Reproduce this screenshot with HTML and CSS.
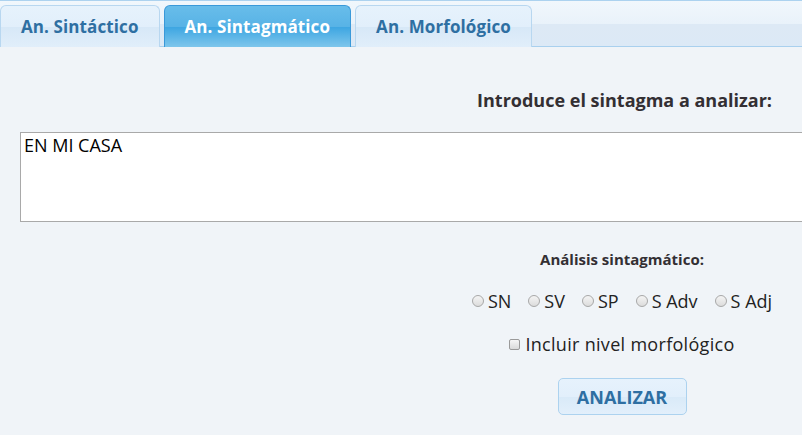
FILE: index.html
```html
<!DOCTYPE html>
<html lang="es">
<head>
<meta charset="utf-8">
<title>Análisis sintagmático</title>
<link rel="stylesheet" href="styles.css">
</head>
<body>
<div class="page">
  <nav class="tabbar">
    <a class="tab">An. Sintáctico</a>
    <a class="tab active">An. Sintagmático</a>
    <a class="tab">An. Morfológico</a>
  </nav>
  <main class="content">
    <div class="prompt">Introduce el sintagma a analizar:</div>
    <textarea class="input">EN MI CASA</textarea>
    <div class="controls">
      <div class="sub">Análisis sintagmático:</div>
      <div class="radios">
        <label class="opt"><span class="radio"></span>SN</label>
        <label class="opt"><span class="radio"></span>SV</label>
        <label class="opt"><span class="radio"></span>SP</label>
        <label class="opt"><span class="radio"></span>S Adv</label>
        <label class="opt"><span class="radio"></span>S Adj</label>
      </div>
      <div class="check"><span class="box"></span>Incluir nivel morfológico</div>
      <button class="btn">ANALIZAR</button>
    </div>
  </main>
</div>
</body>
</html>
```
FILE: styles.css
```css
html, body {
  margin: 0;
  padding: 0;
  background: #f0f4f8;
  overflow: hidden;
}
.page {
  font-family: "Open Sans", "Noto Sans", sans-serif;
  width: 802px;
  height: 435px;
  overflow: hidden;
}
.tabbar {
  display: flex;
  align-items: flex-end;
  gap: 4px;
  box-sizing: border-box;
  height: 47px;
  border-top: 1px solid #acd2ef;
  border-bottom: 1px solid #a9d0ee;
  background: linear-gradient(#f1f7fc 0%, #e9f2fa 50%, #dde9f5 51%, #dce9f6 100%);
}
.tab {
  box-sizing: border-box;
  height: 42px;
  margin-bottom: -1px;
  padding: 0 20px;
  display: flex;
  align-items: center;
  font-weight: bold;
  font-size: 17px;
  letter-spacing: 0.1px;
  color: #2e6fa2;
  border: 1px solid #b8d7f0;
  border-bottom: none;
  border-radius: 6px 6px 0 0;
  background: linear-gradient(#e6f2fc 0%, #e2effb 50%, #d7e8f7 51%, #e1eefa 100%);
}
.tab.active {
  color: #fff;
  border-color: #3a99d9;
  background: linear-gradient(#68bdea 0%, #58b3e6 50%, #3ea6e2 52%, #7ec6ec 100%);
}
.content {
  padding-top: 41px;
}
.prompt {
  width: 772px;
  text-align: right;
  font-weight: bold;
  font-size: 18px;
  color: #332f33;
  line-height: 24px;
}
.input {
  display: block;
  box-sizing: border-box;
  margin: 20px 0 0 20px;
  width: 900px;
  height: 90px;
  border: 1px solid #a9a9a9;
  background: #fff;
  font-family: "Open Sans", "Noto Sans", sans-serif;
  font-size: 18px;
  line-height: 22px;
  color: #000;
  padding: 1px 3px;
  resize: none;
}
.controls {
  width: 1244px;
  display: flex;
  flex-direction: column;
  align-items: center;
}
.sub {
  margin-top: 27px;
  font-weight: bold;
  font-size: 15px;
  color: #332f33;
  line-height: 20px;
}
.radios {
  margin-top: 21px;
  display: flex;
  gap: 17px;
  font-size: 18px;
  color: #222;
  line-height: 22px;
}
.opt {
  display: flex;
  align-items: center;
}
.radio {
  width: 12px;
  height: 12px;
  box-sizing: border-box;
  border-radius: 50%;
  border: 1px solid #a8a8a8;
  background: linear-gradient(#f4f4f4, #dcdcdc);
  margin-right: 4px;
}
.check {
  margin-top: 21px;
  display: flex;
  align-items: center;
  font-size: 18px;
  letter-spacing: 0.3px;
  color: #222;
  line-height: 22px;
}
.box {
  width: 11px;
  height: 11px;
  box-sizing: border-box;
  border: 1px solid #9a9a9a;
  border-radius: 2px;
  background: linear-gradient(#f6f6f6, #dadada);
  margin-right: 5px;
}
.btn {
  margin-top: 23px;
  width: 129px;
  height: 37px;
  border: 1px solid #acd2ef;
  border-radius: 5px;
  background: linear-gradient(#e6f2fc 0%, #e2effb 50%, #d9eaf8 51%, #e2effb 100%);
  font-family: "Open Sans", "Noto Sans", sans-serif;
  font-weight: bold;
  font-size: 18px;
  color: #2e6fa2;
  padding: 0;
}
```
